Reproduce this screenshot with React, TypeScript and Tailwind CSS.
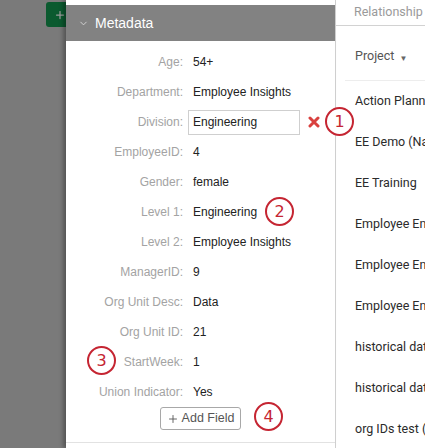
import { ChevronDown, Plus } from 'lucide-react'

const fields: { label: string; value: string; input?: boolean }[] = [
  { label: 'Age', value: '54+' },
  { label: 'Department', value: 'Employee Insights' },
  { label: 'Division', value: 'Engineering', input: true },
  { label: 'EmployeeID', value: '4' },
  { label: 'Gender', value: 'female' },
  { label: 'Level 1', value: 'Engineering' },
  { label: 'Level 2', value: 'Employee Insights' },
  { label: 'ManagerID', value: '9' },
  { label: 'Org Unit Desc', value: 'Data' },
  { label: 'Org Unit ID', value: '21' },
  { label: 'StartWeek', value: '1' },
  { label: 'Union Indicator', value: 'Yes' },
]

const projects = [
  'Action Planning',
  'EE Demo (Name)',
  'EE Training',
  'Employee Engagement',
  'Employee Engagement',
  'Employee Engagement',
  'historical data',
  'historical data',
  'org IDs test (1)',
]

function Callout({ n, className }: { n: number; className: string }) {
  return (
    <div
      className={`absolute w-[29px] h-[29px] rounded-full border-[2.5px] border-[#c52532] bg-white flex items-center justify-center text-[16px] leading-none text-[#c52532] font-['DejaVu_Sans',sans-serif] ${className}`}
    >
      {n}
    </div>
  )
}

export default function App() {
  return (
    <div className="relative w-[425px] h-[448px] flex overflow-hidden bg-white font-['Liberation_Sans',Arial,sans-serif]">
      {/* dimmed page behind */}
      <div className="relative w-[66px] shrink-0 bg-[#7a7a7a] overflow-hidden">
        <div className="absolute left-[46px] top-[2px] w-[28px] h-[25px] rounded-[3px] bg-[#0b5a2f] flex items-center pl-[8px]">
          <Plus size={12} strokeWidth={2.5} className="text-[#9a9a9a]" />
        </div>
      </div>

      {/* metadata panel */}
      <div className="relative z-10 w-[269px] shrink-0 flex flex-col bg-white pt-[5px] shadow-[-3px_0_4px_rgba(0,0,0,0.3)]">
        <div className="h-[36px] bg-[#828282] flex items-center pl-[12px] gap-[6px]">
          <ChevronDown size={11} strokeWidth={2} className="text-[#d6d6d6]" />
          <span className="text-white text-[14px]">Metadata</span>
        </div>
        <div className="flex flex-col pt-[6px] pb-[12px] border-b border-[#e2e2e2]">
          {fields.map((f) => (
            <div key={f.label} className="h-[30px] flex items-center text-[12px]">
              <span className="w-[117px] shrink-0 text-right text-[#a3a3a3] whitespace-nowrap">{f.label}:</span>
              {f.input ? (
                <div className="ml-[5px] w-[112px] h-[25px] border border-[#cfcfcf] flex items-center pl-[4px] text-[#222]">
                  {f.value}
                </div>
              ) : (
                <span className="ml-[10px] text-[#222] whitespace-nowrap">{f.value}</span>
              )}
              {f.input && (
                <svg width="12" height="12" viewBox="0 0 12 12" className="ml-[8px]">
                  <path d="M2 2 L10 10 M10 2 L2 10" stroke="#d9413f" strokeWidth="3" strokeLinecap="round" />
                </svg>
              )}
            </div>
          ))}
          <div className="flex justify-center">
            <button className="h-[23px] px-[6px] flex items-center gap-[3px] border border-[#a8a8a8] rounded-[3px] text-[12.5px] text-[#555] bg-white">
              <Plus size={12} strokeWidth={1.8} />
              Add Field
            </button>
          </div>
        </div>
      </div>

      {/* relationship column */}
      <div className="flex-1 min-w-0 border-l border-[#d2d2d2] flex flex-col font-['Roboto',sans-serif] overflow-hidden">
        <div className="h-[26px] shrink-0 border-b border-[#d2d2d2] pl-[18px] pt-[3px] text-[12.5px] text-[#9a9a9a] whitespace-nowrap">
          Relationship
        </div>
        <div className="h-[55px] shrink-0 ml-[9px] border-b border-[#ededed] flex items-end pb-[14px] pl-[10px] gap-[5px] text-[12.5px] text-[#555]">
          <span>Project</span>
          <span className="text-[8px] text-[#666] pb-[1px]">▼</span>
        </div>
        {projects.map((p, i) => (
          <div key={i} className="h-[41px] shrink-0 flex items-center pl-[19px] text-[12.5px] text-[#2b2b2b] whitespace-nowrap">
            {p}
          </div>
        ))}
      </div>

      <Callout n={1} className="left-[325px] top-[107px] z-20" />
      <Callout n={2} className="left-[265px] top-[197px] z-20" />
      <Callout n={3} className="left-[87px] top-[346px] z-20" />
      <Callout n={4} className="left-[254px] top-[402px] z-20" />
    </div>
  )
}
